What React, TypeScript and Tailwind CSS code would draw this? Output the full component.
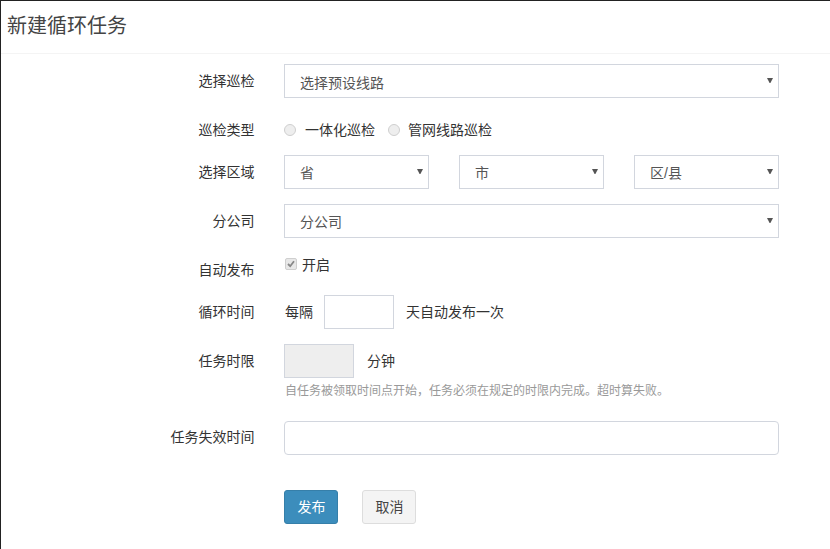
import React from 'react';

const controlClass =
  'h-[34px] border border-[#d2d6de] bg-white px-[12px] text-[14px] text-[#555] outline-none';

const Label: React.FC<{ children: React.ReactNode; className?: string }> = ({ children, className }) => (
  <label className={`w-[254px] shrink-0 pr-[0.5px] text-right text-[14px] leading-[20px] text-[#333] ${className ?? ''}`}>
    {children}
  </label>
);

const Select: React.FC<{ text: string; className?: string; low?: boolean }> = ({ text, className, low }) => (
  <div className={`relative ${className ?? ''}`}>
    <select
      defaultValue={text}
      className={`h-[34px] w-full appearance-none rounded-none border border-[#d2d6de] bg-white pl-[15px] pr-[20px] text-[14px] text-[#555] outline-none ${low ? 'pt-[4px]' : 'pt-[2px]'}`}
    >
      <option>{text}</option>
    </select>
    <svg className="pointer-events-none absolute right-[6px] top-[14px] h-[5px] w-[6px]" viewBox="0 0 6 5">
      <path d="M0 0H6L3.4 5H2.6Z" fill="#555" />
    </svg>
  </div>
);

export default function App() {
  return (
    <div
      className="min-h-[549px] border-t border-l border-[#222] bg-white text-[#333]"
      style={{ fontFamily: '"Liberation Sans", "Noto Sans CJK SC", sans-serif' }}
    >
      {/* Header */}
      <div className="h-[53px] border-b border-[#f4f4f4] pl-[6px] pt-[10px]">
        <h1 className="text-[20px] leading-[30px] font-normal text-[#444]">新建循环任务</h1>
      </div>

      <form className="pt-[10px]">
        {/* Route */}
        <div className="flex items-center">
          <Label className="-mt-[1px]">选择巡检</Label>
          <div className="ml-[29px]">
            <Select text="选择预设线路" className="w-[495px]" low />
          </div>
        </div>

        {/* Type */}
        <div className="mt-[22px] flex h-[20px] items-center">
          <Label>巡检类型</Label>
          <div className="ml-[29px] flex items-center text-[14px] text-[#333]">
            <input type="radio" name="kind" disabled className="m-0 h-[12px] w-[12px] appearance-none rounded-full border border-[#cfcfcf] bg-[#eee]" />
            <span className="ml-[9px]">一体化巡检</span>
            <input type="radio" name="kind" disabled className="ml-[13px] h-[12px] w-[12px] appearance-none rounded-full border border-[#cfcfcf] bg-[#eee]" />
            <span className="ml-[8px]">管网线路巡检</span>
          </div>
        </div>

        {/* Region */}
        <div className="mt-[15px] flex items-center">
          <Label className="-mt-[1px]">选择区域</Label>
          <div className="ml-[29px] flex w-[495px] gap-[30px]">
            <Select text="省" className="w-[145px]" />
            <Select text="市" className="w-[145px]" />
            <Select text="区/县" className="w-[145px]" />
          </div>
        </div>

        {/* Branch */}
        <div className="mt-[15px] flex items-center">
          <Label className="-mt-[1px]">分公司</Label>
          <div className="ml-[29px]">
            <Select text="分公司" className="w-[495px]" />
          </div>
        </div>

        {/* Auto publish */}
        <div className="mt-[17px] flex h-[20px] items-start">
          <Label className="mt-[5px]">自动发布</Label>
          <div className="ml-[30px] flex items-center text-[14px] text-[#333]">
            <span className="relative -mt-[3px] h-[12px] w-[12px] rounded-[2px] border border-[#cfcfcf] bg-[#e8e8e8]">
              <svg className="absolute left-[1px] top-[1px] h-[8px] w-[8px]" viewBox="0 0 8 8">
                <path d="M1 4L3.2 6.2L7 1.2" fill="none" stroke="#888" strokeWidth="1.8" />
              </svg>
            </span>
            <span className="ml-[5px]">开启</span>
          </div>
        </div>

        {/* Cycle */}
        <div className="mt-[20px] flex items-center">
          <Label>循环时间</Label>
          <div className="ml-[30px] flex items-center text-[14px] text-[#333]">
            <span>每隔</span>
            <input type="text" className={`${controlClass} ml-[11px] w-[70px]`} />
            <span className="ml-[12px]">天自动发布一次</span>
          </div>
        </div>

        {/* Time limit */}
        <div className="mt-[15px] flex items-center">
          <Label>任务时限</Label>
          <div className="ml-[29px] flex items-center text-[14px] text-[#333]">
            <input type="text" disabled className={`${controlClass} w-[70px] !bg-[#eee]`} />
            <span className="ml-[13px]">分钟</span>
          </div>
        </div>
        <p className="ml-[284px] mt-[5px] text-[12px] leading-[17px] text-[#999]">
          自任务被领取时间点开始，任务必须在规定的时限内完成。超时算失败。
        </p>

        {/* Expiry */}
        <div className="mt-[21px] flex items-center">
          <Label className="-mt-[2px]">任务失效时间</Label>
          <div className="ml-[29px]">
            <input type="text" className={`${controlClass} w-[495px] rounded-[4px]`} />
          </div>
        </div>

        {/* Actions */}
        <div className="ml-[283px] mt-[35px] flex gap-[24px]">
          <button type="button" className="h-[34px] w-[54px] rounded-[3px] border border-[#367fa9] bg-[#3c8dbc] pl-[1px] text-[14px] text-white">
            发布
          </button>
          <button type="button" className="h-[34px] w-[54px] rounded-[3px] border border-[#ddd] bg-[#f4f4f4] pl-[1px] text-[14px] text-[#444]">
            取消
          </button>
        </div>
      </form>
    </div>
  );
}
